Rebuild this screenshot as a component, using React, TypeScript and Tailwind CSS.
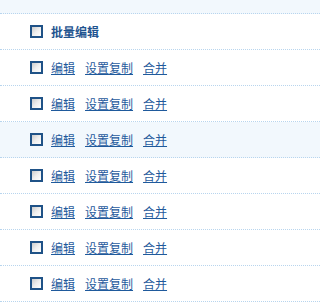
import React from "react";

const font = { fontFamily: '"Noto Sans CJK SC", "Noto Sans", sans-serif' };

function Box() {
  return (
    <span className="inline-block w-[13px] h-[13px] shrink-0 border-2 border-[#1f5287] bg-gradient-to-br from-[#cccccc] via-[#eeeeee] to-[#ffffff]" />
  );
}

export default function App() {
  const rows = [0, 1, 2, 3, 4, 5, 6];
  return (
    <div className="w-full h-[305px] bg-white overflow-hidden" style={font}>
      <div className="h-[14px] bg-[#f2f8fd] border-b border-dotted border-[#b8d5ee]" />
      <div className="h-[36px] flex items-center pl-[30px] gap-[8px] border-b border-dotted border-[#b8d5ee]">
        <Box />
        <span className="text-[12px] leading-[12px] font-bold text-[#1f5490]">批量编辑</span>
      </div>
      {rows.map((i) => (
        <div
          key={i}
          className={
            "h-[36px] flex items-center pl-[30px] gap-[8px] border-b border-dotted border-[#b8d5ee] " +
            (i === 2 ? "bg-[#f2f8fd]" : "bg-white")
          }
        >
          <Box />
          <div className="flex gap-[10px] text-[12px] leading-[14px] text-[#1f5a9c]">
            <a className="underline">编辑</a>
            <a className="underline">设置复制</a>
            <a className="underline">合并</a>
          </div>
        </div>
      ))}
    </div>
  );
}
